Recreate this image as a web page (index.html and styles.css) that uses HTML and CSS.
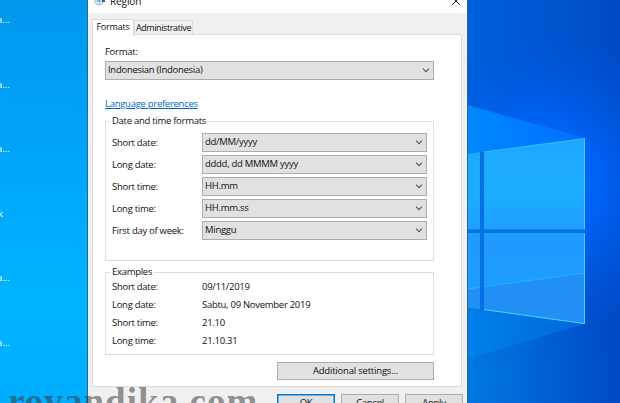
FILE: index.html
```html
<!DOCTYPE html>
<html lang="en">
<head>
<meta charset="utf-8">
<title>Region</title>
<link rel="stylesheet" href="styles.css">
</head>
<body>
<svg class="wallpaper" viewBox="0 0 620 403" aria-hidden="true">
  <defs>
    <linearGradient id="left" x1="0" y1="0" x2="0" y2="1"><stop offset="0" stop-color="#0099ee"/><stop offset=".35" stop-color="#00a3f8"/><stop offset=".75" stop-color="#00b4ff"/><stop offset="1" stop-color="#00adff"/></linearGradient>
    <linearGradient id="right" x1="0" y1="0" x2="1" y2="0"><stop offset="0" stop-color="#0062da"/><stop offset="1" stop-color="#004ac6"/></linearGradient>
    <radialGradient id="glow" gradientUnits="userSpaceOnUse" cx="540" cy="185" r="150"><stop offset="0" stop-color="#006cff"/><stop offset=".4" stop-color="#0064fa" stop-opacity=".9"/><stop offset="1" stop-color="#0058e0" stop-opacity="0"/></radialGradient>
    <radialGradient id="low" gradientUnits="userSpaceOnUse" cx="455" cy="380" r="150"><stop offset="0" stop-color="#007ee0"/><stop offset="1" stop-color="#006cd8" stop-opacity="0"/></radialGradient>
    <linearGradient id="pane" x1="0" y1="0" x2="0" y2="1"><stop offset="0" stop-color="#20a7ff"/><stop offset=".3" stop-color="#1caeff"/><stop offset=".55" stop-color="#2199ff"/><stop offset="1" stop-color="#1ca0ff"/></linearGradient>
    <linearGradient id="beam" x1="0" y1="0" x2="1" y2="0"><stop offset="0" stop-color="#008aff"/><stop offset="1" stop-color="#006eff"/></linearGradient>
    <linearGradient id="beam2" x1="0" y1="0" x2="1" y2="0"><stop offset="0" stop-color="#0083ea"/><stop offset="1" stop-color="#0066dc"/></linearGradient>
  </defs>
  <path fill="url(#left)" d="M0 0h300v403H0z"/>
  <path fill="url(#right)" d="M460 0h160v403H460z"/>
  <path fill="url(#glow)" d="M460 0h160v403H460z"/>
  <path fill="url(#low)" d="M460 230h160v173H460z"/>
  <path fill="url(#beam)" d="M460 103l125 35v40H460z"/>
  <path fill="url(#beam2)" d="M460 280h125v44l-125 37z"/>
  <path fill="#0079e6" d="M460 155l125-17v186l-125-15z"/>
  <path fill="url(#pane)" d="M460 155l20-3v157l-20-2zM484 151.500l101-13.500v186l-101-14z"/>
  <path fill="#228ff5" d="M460 290l20-3v22l-20-2zM484 286.500l101-13.500v51l-101-14z"/>
  <path fill="none" stroke="#26b2ff" d="M460 290l125-17"/>
  <path fill="#0072e4" d="M460 229.500h126v3.500H460zM480 152h4v158h-4z"/>
  <path fill="none" stroke="#43cfff" d="M584.500 138.500V229M584.500 233v90.500L484 309.500"/>
  <path fill="none" stroke="#43cfff" opacity=".5" d="M484 152l100.500-13.500"/>
  <path stroke="#0ebaff" opacity=".4" d="M0 351l88-10"/>
</svg>
<div class="labels"><span>a...</span><span>a...</span><span>a...</span><span class="k">k</span><span>a...</span><span>a...</span></div>
<main class="window">
  <header class="titlebar">
    <svg class="globe" viewBox="0 0 14 12"><circle cx="5" cy="5.500" r="4.500" fill="#d5e5ee" stroke="#a1b7c5"/><path d="M3 2l4 2-1 4-4-3" fill="#7facc7"/><path d="M8 3h3v4H8z" fill="#24679c"/></svg>
    <span>Region</span>
    <svg class="close" viewBox="0 0 10 10"><path d="M1 1l8 8M9 1l-8 8" stroke="#222" fill="none"/></svg>
  </header>
  <nav class="tabs"><span class="tab active">Formats</span><span class="tab">Administrative</span></nav>
  <section class="panel">
    <div class="format">Format:</div>
    <div class="select"><span>Indonesian (Indonesia)</span><svg viewBox="0 0 8 5"><path d="M1 .7l3 3 3-3"/></svg></div>
    <div class="linkrow"><a>Language preferences</a></div>
    <div class="group formats">
      <span class="legend">Date and time formats</span>
      <div class="row"><span>Short date:</span><div class="select"><span>dd/MM/yyyy</span><svg viewBox="0 0 8 5"><path d="M1 .7l3 3 3-3"/></svg></div></div>
      <div class="row"><span>Long date:</span><div class="select"><span>dddd, dd MMMM yyyy</span><svg viewBox="0 0 8 5"><path d="M1 .7l3 3 3-3"/></svg></div></div>
      <div class="row"><span>Short time:</span><div class="select"><span>HH.mm</span><svg viewBox="0 0 8 5"><path d="M1 .7l3 3 3-3"/></svg></div></div>
      <div class="row"><span>Long time:</span><div class="select"><span>HH.mm.ss</span><svg viewBox="0 0 8 5"><path d="M1 .7l3 3 3-3"/></svg></div></div>
      <div class="row"><span>First day of week:</span><div class="select"><span>Minggu</span><svg viewBox="0 0 8 5"><path d="M1 .7l3 3 3-3"/></svg></div></div>
    </div>
    <div class="group examples">
      <span class="legend">Examples</span>
      <div class="row"><span>Short date:</span><span>09/11/2019</span></div>
      <div class="row"><span>Long date:</span><span>Sabtu, 09 November 2019</span></div>
      <div class="row"><span>Short time:</span><span>21.10</span></div>
      <div class="row"><span>Long time:</span><span>21.10.31</span></div>
    </div>
    <div class="button more">Additional settings...</div>
  </section>
  <footer class="actions"><div class="button ok">OK</div><div class="button">Cancel</div><div class="button">Apply</div></footer>
</main>
<div class="watermark">rovandika.com</div>
</body>
</html>
```
FILE: styles.css
```css
* { box-sizing: border-box; }
html { overflow: hidden; }
body { margin: 0; width: 620px; height: 403px; overflow: hidden; position: relative; font: 9.5px/12px "Open Sans", sans-serif; letter-spacing: -.28px; color: #111; }
.wallpaper { position: absolute; inset: 0; width: 620px; height: 403px; }
.labels { position: absolute; left: -3px; top: 14px; display: flex; flex-direction: column; color: #fff; letter-spacing: 0; }
.labels span { height: 64.600px; }
.labels .k { padding-left: 1px; }
.window { position: absolute; left: 87px; top: -6px; width: 381px; height: 409px; overflow: hidden; background: #f0f0f0; border: solid #23679b; border-width: 0 1px; }
.titlebar { height: 19px; background: #fff; display: flex; align-items: center; padding: 0 6px 5px; font-size: 10px; letter-spacing: -.1px; }
.globe { width: 14px; height: 12px; margin-right: 2px; }
.close { width: 10px; height: 10px; margin-left: auto; }
.tabs { height: 22px; padding-left: 4px; display: flex; align-items: flex-end; position: relative; z-index: 1; }
.tab { height: 14px; border: 1px solid #dcdcdc; border-bottom: 0; width: 59px; text-align: center; line-height: 13px; font-size: 9px; letter-spacing: -.4px; white-space: nowrap; display: flex; justify-content: center; margin-bottom: 1px; }
.tab.active { background: #fff; width: 42px; height: 17px; margin-bottom: -1px; letter-spacing: -.2px; line-height: 14px; }
.panel { width: 370px; height: 353px; margin-left: 4px; margin-top: -1px; background: #fff; border: 1px solid #dcdcdc; padding: 11px 27px 0 12px; }
.format { height: 15px; }
.select { height: 19px; border: 1px solid #adadad; background: #e1e1e1; display: flex; align-items: center; justify-content: space-between; padding: 0 3px 1px 2px; }
.select svg { width: 8px; height: 5px; fill: none; stroke: #555; stroke-width: 1.100; }
.linkrow { height: 41px; padding-top: 18px; }
.linkrow a { color: #0066cc; text-decoration: underline; }
.group { border: 1px solid #dcdcdc; padding-left: 6px; position: relative; }
.legend { position: absolute; top: -7px; left: 4px; padding: 0 2px; background: #fff; }
.formats { height: 140px; padding-top: 11px; padding-right: 6px; }
.row { display: grid; grid-template-columns: 90px 1fr; align-items: center; }
.formats .row { height: 19px; margin-bottom: 3px; }
.examples { height: 83px; margin-top: 11px; padding-top: 5px; }
.examples .row { height: 18px; }
.button { border: 1px solid #adadad; background: #e1e1e1; text-align: center; }
.more { width: 157px; height: 18px; margin: 7px 0 0 auto; line-height: 15px; letter-spacing: -.2px; }
.actions { display: flex; gap: 6px; justify-content: flex-end; padding: 7px 4px 0; }
.actions .button { width: 58px; height: 20px; line-height: 15px; }
.actions .ok { border: 1px solid #0078d7; box-shadow: inset 0 0 0 .5px #0078d7; }
.watermark { position: absolute; left: 8px; top: 382px; height: 21px; overflow: hidden; font: bold 37px/40px "Liberation Serif", serif; letter-spacing: 1.050px; color: rgba(60,60,60,.55); white-space: nowrap; }
```
